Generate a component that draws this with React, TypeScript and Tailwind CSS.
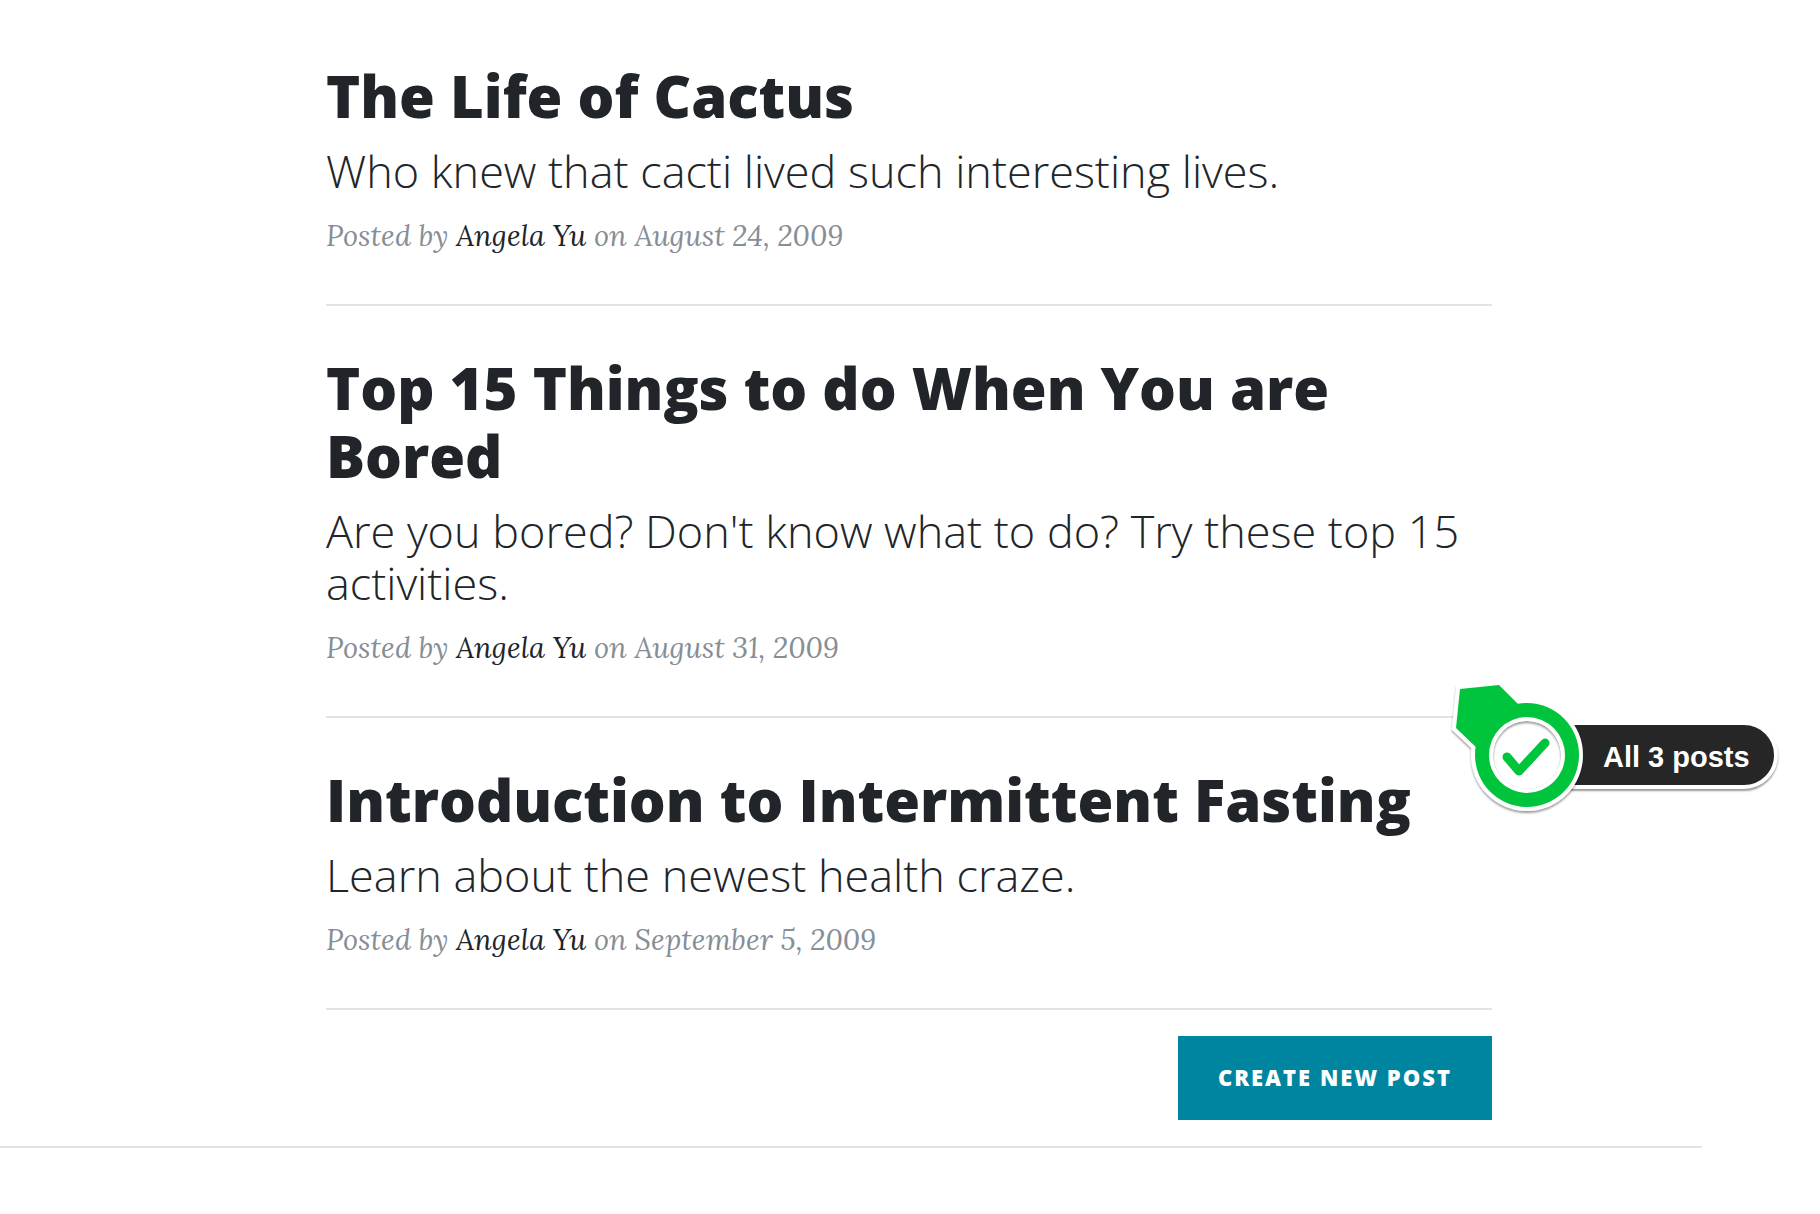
type Post = {
  title: string;
  subtitle: string;
  author: string;
  date: string;
};

const posts: Post[] = [
  {
    title: 'The Life of Cactus',
    subtitle: 'Who knew that cacti lived such interesting lives.',
    author: 'Angela Yu',
    date: 'August 24, 2009',
  },
  {
    title: 'Top 15 Things to do When You are Bored',
    subtitle: "Are you bored? Don't know what to do? Try these top 15 activities.",
    author: 'Angela Yu',
    date: 'August 31, 2009',
  },
  {
    title: 'Introduction to Intermittent Fasting',
    subtitle: 'Learn about the newest health craze.',
    author: 'Angela Yu',
    date: 'September 5, 2009',
  },
];

function PostPreview({ post }: { post: Post }) {
  return (
    <article className="border-b-2 border-[#e4e4e4] pt-12 pb-[46px]">
      <a href="#post" className="block font-['Open_Sans',sans-serif] text-[#212529]">
        <h2 className="text-[58px] leading-[68px] font-extrabold">{post.title}</h2>
        <h3 className="mt-[15px] text-[45px] leading-[52px] font-light">{post.subtitle}</h3>
      </a>
      <p className="mt-[17px] font-[Lora,'Liberation_Serif',serif] text-[29px] leading-[44px] text-[#868e96] italic">
        Posted by{' '}
        <a href="#author" className="text-[#212529]">
          {post.author}
        </a>{' '}
        on {post.date}
      </p>
    </article>
  );
}

/* Callout pinned to the list: a pointer badge followed by a dark label. */
function Callout() {
  return (
    <div className="absolute -top-12 left-full -ml-12 flex w-max items-start">
      <svg width="144" height="152" viewBox="0 0 144 152" className="relative z-10 -mr-10 shrink-0" aria-hidden="true">
        <defs>
          <filter id="lift" x="-20%" y="-20%" width="140%" height="140%">
            <feDropShadow dx="0" dy="2" stdDeviation="1" floodColor="#000" floodOpacity="0.4" />
          </filter>
          <filter id="soften" x="-20%" y="-20%" width="140%" height="140%">
            <feGaussianBlur stdDeviation="0.8" />
          </filter>
          <clipPath id="dial">
            <circle cx="83" cy="85" r="34" />
          </clipPath>
        </defs>
        <g filter="url(#lift)">
          <path d="M16 19 L55 15 L74 34 L31 76 L12 58 Z" fill="#fff" stroke="#fff" strokeWidth="8" />
          <circle cx="83" cy="85" r="56" fill="#fff" />
        </g>
        <path d="M16 19 L55 15 L75 35 L34 79 L12 58 Z" fill="#00c53c" />
        <circle cx="83" cy="85" r="52" fill="#00c53c" />
        <circle cx="83" cy="85" r="38" fill="#fff" />
        <g clipPath="url(#dial)">
          <circle cx="83" cy="85" r="34" fill="#999" />
          <circle cx="83" cy="87" r="34" fill="#fff" filter="url(#soften)" />
        </g>
        <path d="M63 87 L75 101 L101 73" fill="none" stroke="#00c53c" strokeWidth="9" strokeLinecap="round" strokeLinejoin="round" />
      </svg>
      <span className="mt-[51px] rounded-r-full border-4 border-white bg-[#262626] pt-1 pr-6 pl-[51px] font-['Liberation_Sans',Arial,sans-serif] text-[29px] leading-[56px] font-bold text-white shadow-[0_2px_2px_rgba(0,0,0,0.4)]">
        All 3 posts
      </span>
    </div>
  );
}

export default function App() {
  return (
    <main className="min-h-screen bg-white pt-[14px]">
      <div className="pr-0.5">
        <div className="mx-auto max-w-[1166px]">
          <PostPreview post={posts[0]} />
          <PostPreview post={posts[1]} />
          <div className="relative">
            <PostPreview post={posts[2]} />
            <Callout />
          </div>
          <div className="mt-[26px] flex justify-end">
            <button
              type="button"
              className="bg-[#0085a1] px-10 pt-[25px] pb-[27px] font-['Open_Sans',sans-serif] text-[22px] leading-8 font-extrabold tracking-[2px] text-white uppercase"
            >
              Create New Post
            </button>
          </div>
        </div>
      </div>
      <hr className="mt-[26px] mr-[118px] border-t-2 border-[#e4e4e4]" />
    </main>
  );
}
